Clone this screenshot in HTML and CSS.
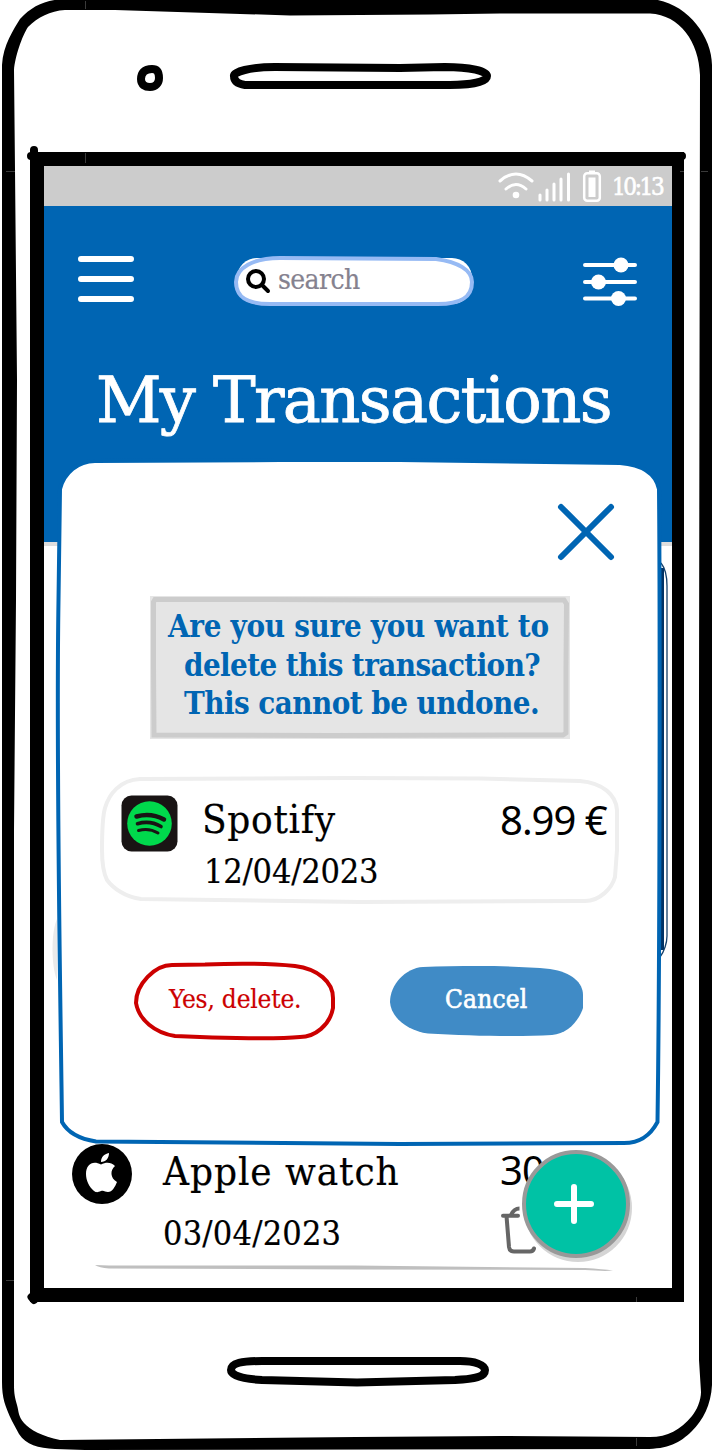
FILE: index.html
```html
<!DOCTYPE html>
<html lang="en">
<head>
<meta charset="utf-8">
<title>My Transactions</title>
<link rel="stylesheet" href="styles.css">
</head>
<body>
<div class="phone">
  <svg class="frame" viewBox="0 0 712 1450">
    <path fill-rule="evenodd" d="M2 65C3 45 14 29 20 19C32 6 45 0 64 -1H650C685 1 712 35 712 65V1385C711 1405 703 1420 692 1431C680 1443 668 1449 645 1449L85 1450L55 1449C38 1448 26 1445 19 1434L12 1421C5 1406 2 1398 2 1382ZM14 70C15 57 22 36 28 27C38 17 50 11 65 10H115L290 15.500L430 14.500L500 13.500H650C680 15 699 42 700 75L699 700V1360L701 1392C701 1400 697 1410 692 1416C680 1430 668 1437 650 1437L500 1436L356 1437L60 1440C42 1436 30 1430 24 1423C18 1416 19 1412 17 1405C15 1398 14 1394 14 1385V830L16 600L17 380L15 170Z"/>
    <path class="pen" d="M152 69C144 69 141 73 141 79C141 85 145 87 150 87C156 87 159 83 159 78C159 72 157 69 152 69Z"/>
    <path class="pen" d="M234 76C233 72 250 67 275 67L400 68L445 67C470 67 487 71 487 76C487 82 470 85 450 85H245C238 84 234 81 234 76Z"/>
    <path class="pen" d="M231 1370C231 1363 242 1361 262 1361H460C475 1361 485 1365 485 1370C485 1377 475 1379 455 1380L357 1382.500L262 1380C242 1379 231 1375 231 1370Z"/>
    <path class="bezel" d="M30 152H684V1302H30Z"/>
    <path class="pen" d="M34 150V158M31 156H40M682 156H681M31.500 1297L34 1300"/>
    <path class="tick" d="M85.500 1V9M85.500 153V163M6 171.500H15M680 171.500H684M701 171.500H708M6 1280.500H14M636.500 1297V1302M636.500 1438V1446"/>
  </svg>

  <main class="screen">
    <div class="status">
      <svg class="wifi" viewBox="0 0 36 28"><path d="M2 9Q18 -5 34 9M8 17Q18 8 28 17"/><circle cx="18" cy="23" r="3.300"/></svg>
      <svg class="signal" viewBox="0 0 32 30"><path d="M2 24V29M9 19V29M16 13V29M23 8V29M30.500 3V29"/></svg>
      <svg class="battery" viewBox="0 0 18 32"><rect x="1.200" y="3.200" width="15.600" height="27.600" rx="3"/><path d="M6 .5H12V3H6ZM5.500 7.500H12.500V27H5.500Z"/></svg>
      <span class="clock">10:13</span>
    </div>
    <header class="header">
      <div class="toolbar">
        <svg class="menu" viewBox="0 0 56 46"><path d="M3 3H53M3 23H53M3 43H53"/></svg>
        <div class="search">
          <svg class="search-shape" viewBox="234 255 240 52">
            <rect x="237" y="258" width="235" height="46" rx="20" fill="#fff"/>
            <path d="M236 282C236 268 253 258 280 258L436 259C458 262 472 270 472 282C472 298 460 304 438 304H270C248 304 236 298 236 282Z"/>
          </svg>
          <svg class="lens" viewBox="0 0 24 24"><circle cx="10" cy="10" r="8"/><path d="M16 16L22 22"/></svg>
          <span class="search-text">search</span>
        </div>
        <svg class="filters" viewBox="0 0 54 50"><path d="M2 8H52M2 25H52M2 41.500H52"/><circle cx="38" cy="8" r="7.500"/><circle cx="15.500" cy="25" r="7.500"/><circle cx="35.500" cy="41.500" r="7.500"/></svg>
      </div>
      <h1 class="title">My Transactions</h1>
    </header>
    <section class="list">
      <svg class="list-outline" viewBox="44 546 628 440">
        <path d="M57 919C51 932 51 966 57 980Z" fill="#eaeaea"/>
        <path d="M662.500 568V950" stroke="#003366" stroke-width="3"/>
        <path d="M661 563C665 568 667 578 667 586V936C667 943 664 952 660 957" fill="none" stroke="#14406b" stroke-width="1.300"/>
      </svg>
      <article class="row">
        <svg class="apple" viewBox="0 0 60 60"><circle cx="30" cy="30" r="30"/><path fill="#fff" d="M29 20.500C34 18 39 18 43 22C38 26 38 34 45 38C43 43 40 48 36 48C33 48 32 46 29 47C26 48 25 49 22 47C17 43 14 36 14 30C14 20 21 16 29 20.500ZM29 18C29 13 32 10 37 9C37 14 34 18 29 18Z"/></svg>
        <div class="row-text">
          <span class="name name-long">Apple watch</span>
          <span class="date date-long">03/04/2023</span>
        </div>
        <div class="row-end">
          <span class="price">30</span>
          <svg class="trash" viewBox="0 0 48 52"><path d="M3 11.700H18M6.500 12L9 43Q9.500 47.500 14 47.500H30Q33 47.500 34 44.500"/><path class="trash-handle" d="M11 11Q14 4.500 19.500 4.500"/></svg>
        </div>
      </article>
      <svg class="divider" viewBox="0 0 518 7"><path d="M0 0L14 .5L260 .5L490 3Q508 4 518 5.500L510 6L490 5L260 4.500L14 3.500Q4 2.500 0 0Z"/></svg>
    </section>
  </main>

  <div class="modal">
    <svg class="modal-shape" viewBox="56 458 606 690"><path d="M60 489C64 473 78 461 95 461L280 460H400L620 463C645 465 656 475 659 489C660 600 660 950 657.500 1122C650 1136 640 1143 624 1143L400 1144L96 1141.500C80 1139 68 1133 62 1122C60 970 56 760 58.500 600Z"/></svg>
    <svg class="close" viewBox="0 0 56 56"><path d="M3 3L53 53M53 3L3 53"/></svg>
    <div class="message">
      <svg class="message-shape" viewBox="0 0 420 143"><path d="M3.500 6L5 3.500H120L230 4H414L416.500 8L416 70V137L413 139L180 139.500L4 139L3.500 70Z"/></svg>
      <p class="line line-1">Are you sure you want to</p>
      <p class="line line-2">delete this transaction?</p>
      <p class="line line-3">This cannot be undone.</p>
    </div>
    <div class="item">
      <svg class="item-shape" viewBox="100 775 520 130"><path d="M102 850C102 830 103 815 105 808C109 794 120 780 140 779L350 778L480 778.500L580 781C603 783 616 795 617 810V850L615 877C612 888 600 901 585 901L360 902L141 899C125 897 113 888 107 880C103 872 102 862 102 850Z"/></svg>
      <svg class="spotify" viewBox="0 0 57 57"><rect x=".5" y=".5" width="56" height="56" rx="10" fill="#191414"/><circle cx="28.500" cy="28.500" r="22.300" fill="#00d94c"/><path d="M15.500 21.500Q30 17.500 43 24.500" stroke-width="4.500"/><path d="M16.500 28.700Q29 25 40 31.500" stroke-width="3.600"/><path d="M17.500 35.500Q28 32.500 37 38" stroke-width="3"/></svg>
      <div class="item-text">
        <span class="name name-short">Spotify</span>
        <span class="date date-short">12/04/2023</span>
      </div>
      <span class="price item-price">8.99 €</span>
    </div>
    <div class="actions">
      <button class="btn btn-delete">
        <svg class="btn-shape" viewBox="134 961 201 80"><path d="M136 1003C136 984 155 965 172 965L205 964.500C230 963.500 265 963 295 966C318 969 333 982 333 998V1008C330 1025 315 1037 300 1037C280 1039 225 1038.500 175 1036C155 1033 139 1020 136 1003Z"/></svg>
        <span class="btn-label">Yes, delete.</span>
      </button>
      <button class="btn btn-cancel">
        <svg class="btn-shape" viewBox="390 966 193 71"><path d="M390 1002C390 985 405 968 423 967C460 966 510 965 550 969C572 972 583 983 583 995V1008C579 1021 567 1034 552 1035C520 1037 470 1036 428 1033.500C408 1031 391 1018 390 1002Z"/></svg>
        <span class="btn-label">Cancel</span>
      </button>
    </div>
  </div>

  <button class="fab"><svg viewBox="0 0 40 40"><path d="M3 20H37M20 3V37"/></svg></button>
</div>
</body>
</html>
```
FILE: styles.css
```css
* { box-sizing: border-box; }
body { margin: 0; background: #fff; color: #000; font-family: "Roboto Slab", "DejaVu Serif Condensed", "DejaVu Serif", serif; font-stretch: condensed; }
svg { display: block; flex: none; overflow: visible; }
button { padding: 0; border: 0; background: none; font: inherit; }
span, h1, p { white-space: nowrap; }

.phone { position: relative; width: 712px; height: 1450px; padding: 166px 40px 162px 44px; overflow: hidden; }
.frame { position: absolute; inset: 0; width: 712px; height: 1450px; }
.pen { fill: none; stroke: #000; stroke-width: 8; stroke-linecap: round; }
.bezel { fill: #000; }
.tick { stroke: #3a3a3a; stroke-width: 1; }

.screen { position: relative; display: flex; flex-direction: column; width: 628px; height: 1122px; background: #fff; }

.status { display: flex; align-items: center; height: 40px; padding-left: 454px; background: #ccc; color: #fff; }
.status svg { fill: #fff; stroke: none; }
.wifi { width: 36px; height: 28px; }
.wifi path, .signal path { fill: none; stroke: #fff; stroke-width: 3; stroke-linecap: round; }
.signal { width: 32px; height: 30px; margin-left: 4px; }
.battery { width: 18px; height: 32px; margin-left: 13px; }
.battery rect { fill: none; stroke: #fff; stroke-width: 2.5; }
.clock { margin: 2px 0 0 11px; font-size: 24px; line-height: 38px; letter-spacing: -2.4px; -webkit-text-stroke: .6px #fff; }

.header { height: 340px; padding-top: 49px; background: #0065b3; border-bottom: 4px solid #ddd; color: #fff; }
.toolbar { display: flex; align-items: flex-start; height: 52px; padding-left: 34px; }
.menu { width: 56px; height: 46px; margin-top: 1px; stroke: #fff; stroke-width: 6; stroke-linecap: round; }
.search { position: relative; display: flex; align-items: center; width: 240px; height: 52px; margin-left: 100px; padding-left: 12px; }
.search-shape { position: absolute; inset: 0; width: 240px; height: 52px; }
.search-shape path { fill: #fff; stroke: #96baf4; stroke-width: 4; }
.lens { position: relative; width: 24px; height: 24px; fill: none; stroke: #000; stroke-width: 4; stroke-linecap: round; }
.search-text { position: relative; margin-left: 8px; margin-top: -4px; font-size: 28px; color: #85828f; letter-spacing: -.6px; -webkit-text-stroke: .2px; }
.filters { width: 54px; height: 50px; margin: 2px 0 0 109px; fill: #fff; }
.filters path { stroke: #fff; stroke-width: 4; stroke-linecap: round; }
.title { margin: 53px 0 0 52px; font-family: "Roboto Slab", "DejaVu Serif", serif; font-stretch: normal; font-size: 64px; line-height: 80px; font-weight: 400; letter-spacing: -1.7px; -webkit-text-stroke: .8px #fff; }

.list { position: relative; display: flex; flex-direction: column; flex: 1; padding-top: 598px; }
.list-outline { position: absolute; top: 0; left: 0; width: 628px; height: 440px; }
.row { display: flex; height: 121px; padding-left: 28px; }
.apple { width: 60px; height: 60px; }
.row-text { display: flex; flex-direction: column; width: 368px; padding: 2px 0 0 31px; }
.name { font-size: 40px; line-height: 50px; -webkit-text-stroke: .2px; }
.name-long { height: 59px; letter-spacing: .95px; }
.date { font-size: 34px; line-height: 56px; -webkit-text-stroke: .2px; }
.date-long { letter-spacing: .2px; }
.row-end { padding-top: 1px; }
.price { display: block; height: 50px; font-family: "Noto Sans", sans-serif; font-stretch: normal; font-size: 40px; line-height: 50px; letter-spacing: -1px; }
.trash { width: 48px; height: 52px; margin-top: 9px; fill: none; stroke: #666; stroke-width: 4; stroke-linecap: round; }
.trash-handle { stroke-linecap: butt; }
.divider { width: 518px; height: 7px; margin-left: 51px; fill: #bfbfbf; }

.modal { position: absolute; left: 56px; top: 458px; width: 606px; height: 690px; padding-top: 46px; }
.modal-shape { position: absolute; inset: 0; width: 606px; height: 690px; fill: #fff; stroke: #0065b3; stroke-width: 4; }
.close { position: relative; width: 56px; height: 56px; margin-left: 502px; stroke: #0065b3; stroke-width: 6; stroke-linecap: round; }
.message { position: relative; width: 420px; height: 143px; margin: 36px 0 0 94px; padding-top: 11px; background: #e5e5e5; color: #0065b3; }
.message-shape { position: absolute; inset: 0; width: 420px; height: 143px; fill: none; stroke: #ccc; stroke-width: 5; }
.line { position: relative; margin: 0; height: 38.5px; font-size: 31px; line-height: 38.5px; font-weight: 700; }
.line-1 { padding-left: 18px; letter-spacing: -.3px; }
.line-2 { padding-left: 34px; letter-spacing: -.6px; }
.line-3 { padding-left: 34px; letter-spacing: -.55px; }
.item { position: relative; display: flex; width: 520px; height: 130px; margin: 36px 0 0 44px; padding: 19px 0 0 20px; }
.item-shape { position: absolute; inset: 0; width: 520px; height: 130px; fill: none; stroke: #eee; stroke-width: 4; }
.spotify { position: relative; width: 57px; height: 57px; margin: .5px .5px 0; fill: none; stroke: #191414; stroke-linecap: round; }
.spotify rect, .spotify circle { stroke: none; }
.item-text { display: flex; flex-direction: column; width: 322px; padding-left: 24px; }
.name-short { height: 49px; letter-spacing: .7px; }
.date-short { padding-left: 2px; letter-spacing: -.2px; }
.item-price { margin-top: 1px; }
.actions { display: flex; margin-top: 56px; padding-left: 78px; }
.btn { position: relative; display: flex; font-size: 26px; line-height: 32px; }
.btn-shape { position: absolute; inset: 0; width: 100%; height: 100%; }
.btn-label { position: relative; }
.btn-delete { width: 201px; height: 80px; padding: 22px 0 0 35px; color: #c00; letter-spacing: -.2px; -webkit-text-stroke: .2px; }
.btn-delete .btn-shape { fill: #fff; stroke: #c00; stroke-width: 4; }
.btn-cancel { width: 193px; height: 71px; margin: 5px 0 0 55px; padding: 17px 0 0 55px; color: #fff; letter-spacing: .2px; -webkit-text-stroke: .6px #fff; }
.btn-cancel .btn-shape { fill: #408bc6; stroke: none; }

.fab { position: absolute; left: 522px; top: 1150px; display: flex; align-items: center; justify-content: center; width: 108px; height: 108px; padding-right: 4px; border: 4px solid #999; border-radius: 50%; background: #00c2a5; box-shadow: 2px 4px 0 #d5d5d5; }
.fab svg { width: 40px; height: 40px; stroke: #fff; stroke-width: 6; stroke-linecap: round; }
```
